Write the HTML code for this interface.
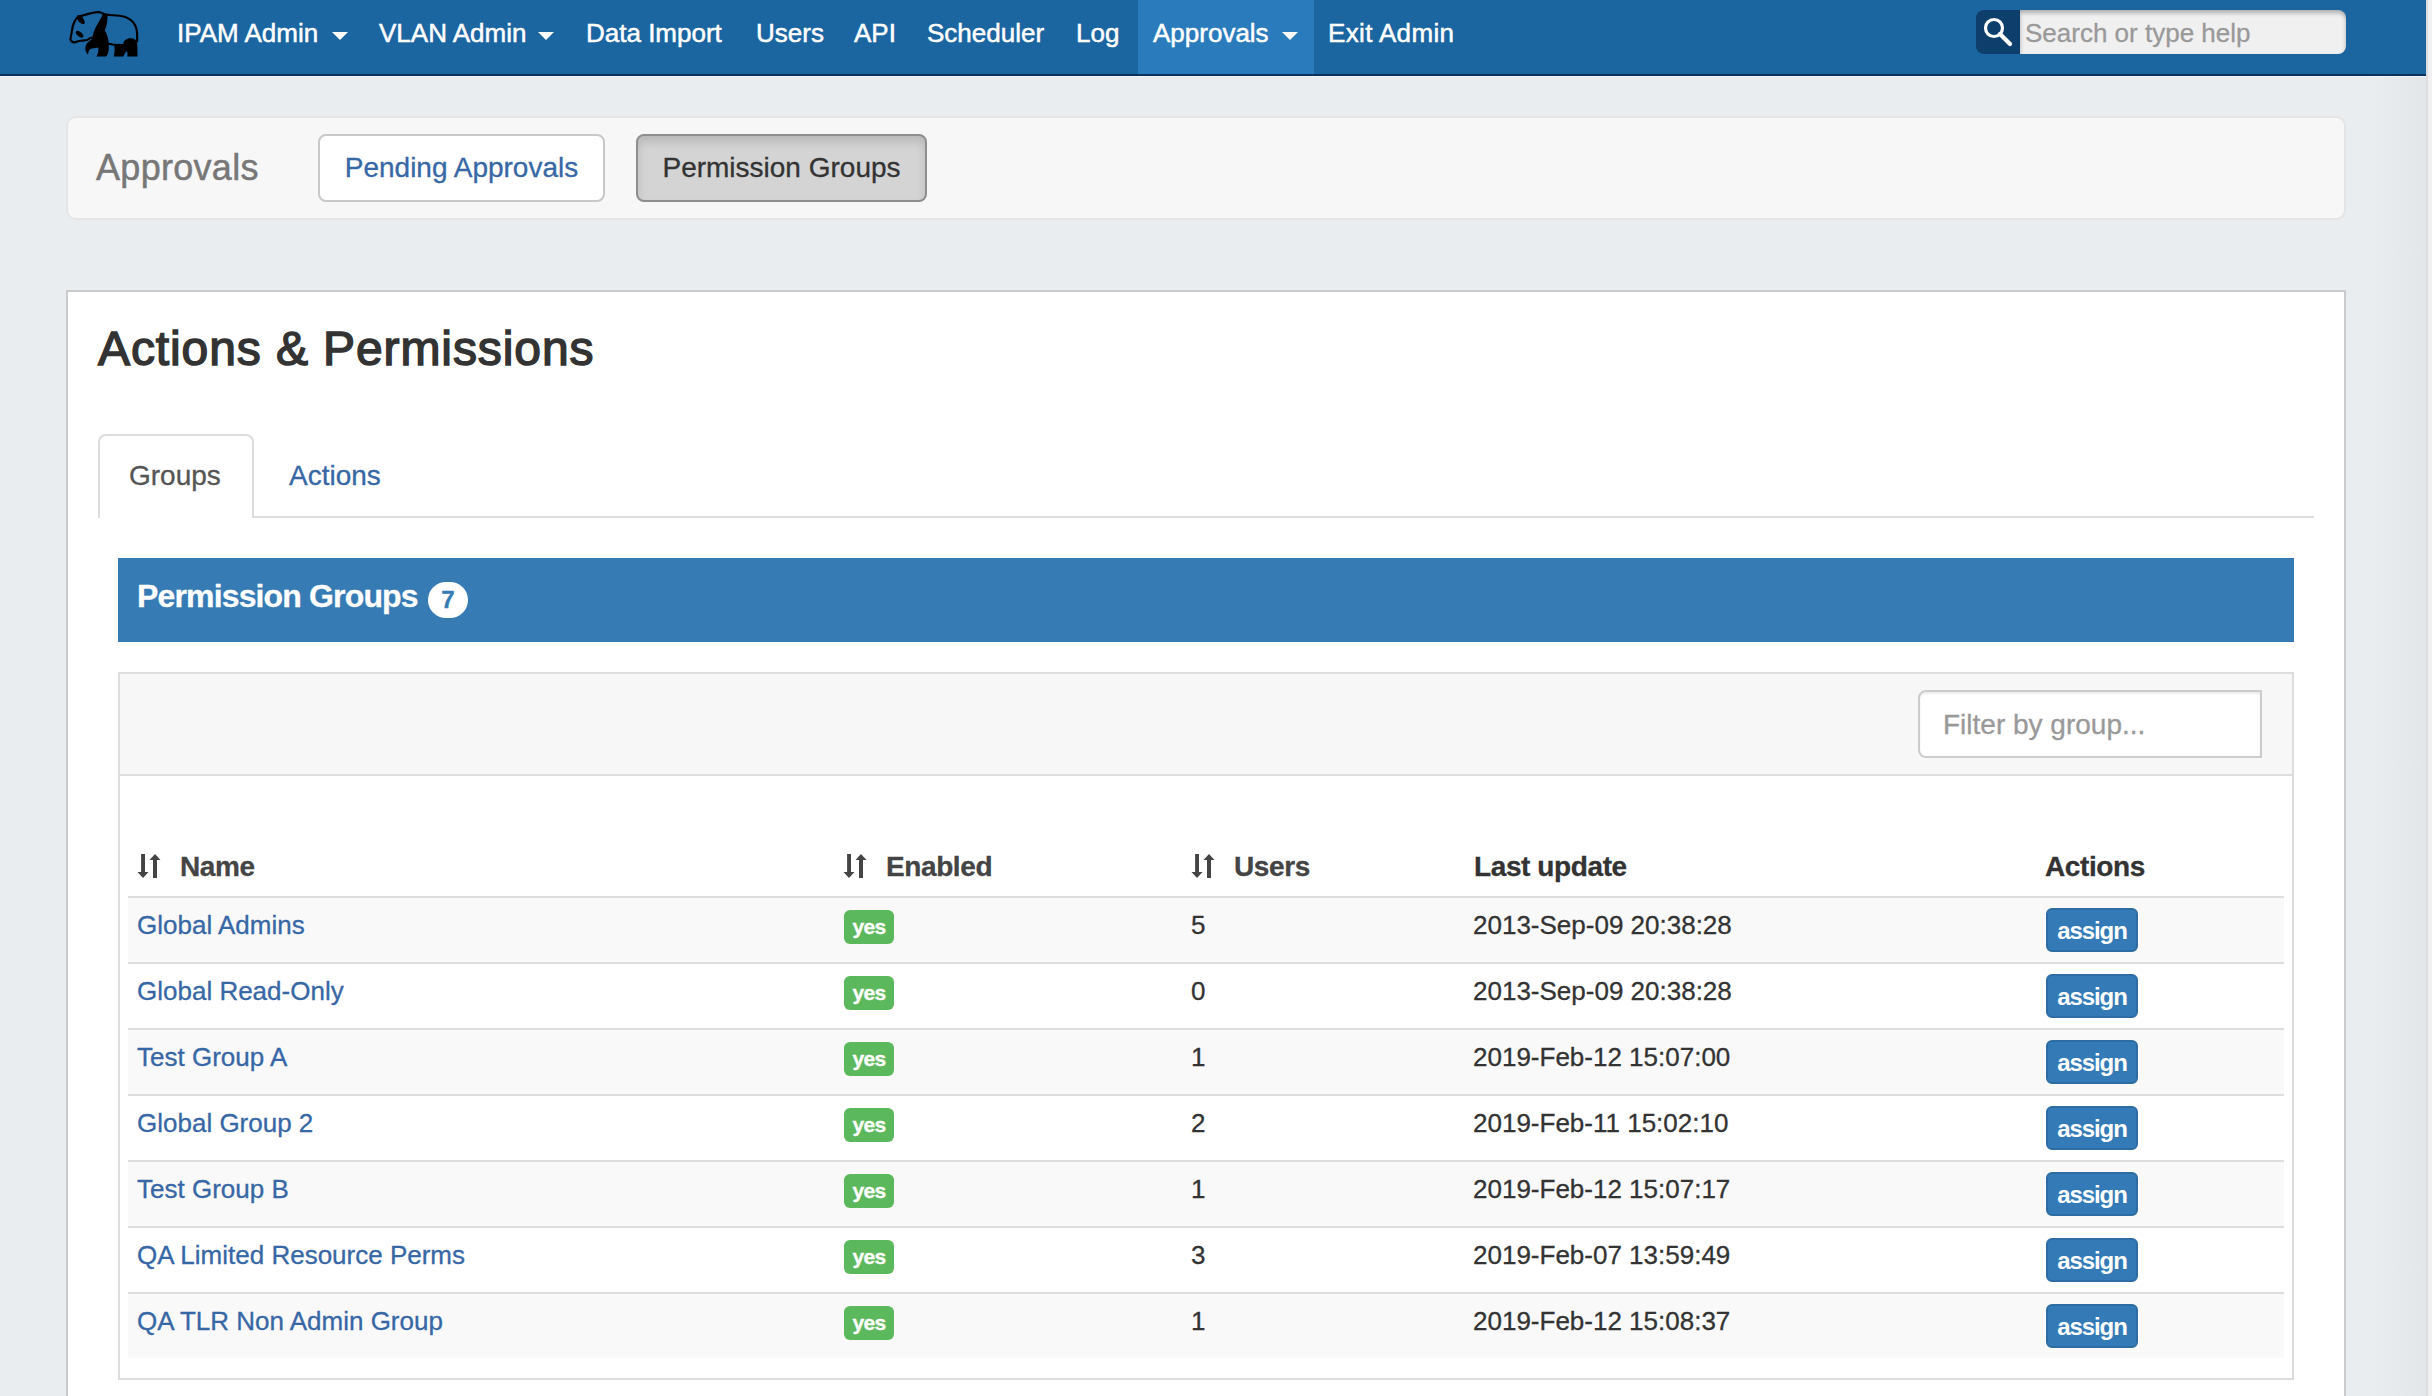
<!DOCTYPE html>
<html><head><meta charset="utf-8">
<style>
*{box-sizing:border-box;margin:0;padding:0}
html,body{width:2432px;height:1396px;overflow:hidden}
body{background:#e9edf0;font-family:"Liberation Sans",sans-serif;position:relative;color:#333}
.a{position:absolute;white-space:nowrap;-webkit-text-stroke:0.3px currentColor}
#strip{left:2426px;top:0;width:6px;height:1396px;background:linear-gradient(to right,#dedede 0,#dedede 2px,#f1f1f1 2px)}
#rgrad{left:2346px;top:76px;width:80px;height:1320px;background:linear-gradient(to right,rgba(0,0,0,0) 0,rgba(0,0,0,0) 30%,rgba(40,50,60,.035) 100%)}
#navhl{left:0;top:76px;width:2426px;height:1px;background:#f1f3f5}
#nav{left:0;top:0;width:2426px;height:76px;background:#1b65a1;border-bottom:2px solid #0b325c}
#navact{left:1138px;top:0;width:176px;height:74px;background:#2a7bbb}
.ni{color:#fff;font-size:26px;top:18px;line-height:30px;-webkit-text-stroke:0.5px #fff}
.caret{width:0;height:0;border-left:8px solid transparent;border-right:8px solid transparent;border-top:8px solid #fff;top:32px}
#sadd{left:1976px;top:10px;width:44px;height:44px;background:#0e3f6c;border-radius:8px 0 0 8px}
#sinp{left:2020px;top:10px;width:326px;height:44px;background:#f0f0f0;border-radius:0 8px 8px 0;box-shadow:inset 0 3px 4px rgba(0,0,0,.28)}
#sph{left:2025px;top:18px;font-size:26px;color:#999;line-height:30px}

#bc{left:66px;top:116px;width:2280px;height:104px;background:#f7f7f7;border:2px solid #e5e5e5;border-radius:10px}
#bct{left:96px;top:147px;font-size:36px;color:#777;line-height:42px;letter-spacing:0.3px;-webkit-text-stroke:0.5px #777}
.btn{border-radius:8px;font-size:28px;line-height:32px;text-align:center}
#b1{left:318px;top:134px;width:287px;height:68px;background:#fff;border:2px solid #c8c8c8;color:#3767a5;padding-top:16px}
#b2{left:636px;top:134px;width:291px;height:68px;background:#d4d4d4;border:2px solid #8e8e8e;color:#333;padding-top:16px;box-shadow:inset 0 6px 10px rgba(0,0,0,.13)}

#main{left:66px;top:290px;width:2280px;height:1200px;background:#fff;border:2px solid #cbcbcb}
#h3{left:98px;top:321px;font-size:48px;font-weight:normal;color:#333;line-height:56px;letter-spacing:0.9px;-webkit-text-stroke:1.5px #333}
#tabline{left:98px;top:516px;width:2216px;height:2px;background:#ddd}
#tab1{left:98px;top:434px;width:156px;height:84px;background:#fff;border:2px solid #ddd;border-bottom:none;border-radius:8px 8px 0 0}
#t1{left:129px;top:460px;font-size:28px;color:#555;line-height:32px}
#t2{left:289px;top:460px;font-size:28px;color:#3767a5;line-height:32px}

#ph{left:118px;top:558px;width:2176px;height:84px;background:#377bb5}
#pht{left:137px;top:578px;font-size:32px;font-weight:bold;color:#fff;line-height:36px;letter-spacing:-0.85px}
#badge{left:428px;top:582px;width:40px;height:36px;border-radius:18px;background:#fff;color:#377bb5;font-size:24px;font-weight:bold;text-align:center;line-height:36px}

#tc{left:118px;top:672px;width:2176px;height:708px;border:2px solid #ddd;background:#fff}
#fbar{left:120px;top:674px;width:2172px;height:102px;background:#f7f7f7;border-bottom:2px solid #ddd}
#finp{left:1918px;top:690px;width:344px;height:68px;background:#fff;border:2px solid #ccc;border-radius:8px 0 0 8px;box-shadow:inset 0 2px 2px rgba(0,0,0,.075)}
#fph{left:1943px;top:709px;font-size:28px;color:#999;line-height:32px}

.th{font-size:28px;font-weight:bold;color:#444;top:851px;line-height:32px;letter-spacing:-0.4px}
.sort{top:854px;width:24px;height:25px}
.row{left:128px;width:2156px;height:66px;border-top:2px solid #ddd}
.odd{background:#f9f9f9}
.td{font-size:26px;color:#333;line-height:30px}
.lnk{color:#3767a5}
.yes{width:50px;height:34px;background:#5cb85c;border-radius:6px;color:#fff;font-size:21px;font-weight:bold;text-align:center;line-height:34px;letter-spacing:-0.7px}
.asg{width:92px;height:44px;background:#337ab7;border:2px solid #2e6da4;border-radius:6px;color:#fff;font-size:24px;font-weight:bold;text-align:center;line-height:41px;letter-spacing:-1.1px;-webkit-text-stroke:0}
</style></head><body>
<div class="a" id="rgrad"></div>
<div class="a" id="navhl"></div>
<div class="a" id="strip"></div>
<div class="a" id="nav"></div>
<div class="a" id="navact"></div>
<svg class="a" style="left:66px;top:8px" width="76" height="52" viewBox="0 0 2040 1396">
 <g fill="none" stroke="#000" stroke-width="58" stroke-linecap="round">
  <path d="M330 230 C500 200 700 100 880 110 C950 115 990 150 1050 170 C1200 200 1400 190 1550 230 C1750 290 1900 450 1910 700 L1910 900"/>
  <path d="M330 230 C250 300 180 450 160 600 C150 700 120 780 120 850 C140 920 220 940 300 900 C380 870 460 880 560 860 C620 840 640 790 700 800"/>
  <path d="M1150 960 C1250 990 1400 1000 1560 990"/>
 </g>
 <g fill="#000">
  <path d="M300 215 C320 185 390 190 425 225 C465 270 505 340 505 395 C505 430 460 435 425 422 C375 402 325 352 302 300 C290 268 288 235 300 215 Z"/>
  <ellipse cx="365" cy="705" rx="120" ry="62" transform="rotate(38 365 705)"/>
  <path d="M990 150 L1110 180 C1120 300 1110 450 1040 600 C1100 700 1150 850 1150 1000 C1150 1150 1140 1250 1070 1300 L820 1300 C850 1230 880 1150 870 1060 C780 1080 680 1080 630 1120 C600 1160 600 1220 590 1250 C540 1220 510 1130 520 1040 C530 960 600 900 700 830 C720 700 760 560 850 420 C910 320 960 240 990 150 Z"/>
  <path d="M1540 950 C1550 840 1700 800 1800 820 C1870 840 1910 900 1915 1000 L1920 1300 L1640 1300 C1650 1250 1670 1200 1620 1160 C1580 1200 1570 1250 1540 1300 L1280 1300 C1300 1250 1310 1150 1300 1000 L1540 1000 Z"/>
 </g>
</svg>
<div class="a ni" style="left:177px">IPAM Admin</div>
<div class="a caret" style="left:332px"></div>
<div class="a ni" style="left:379px">VLAN Admin</div>
<div class="a caret" style="left:538px"></div>
<div class="a ni" style="left:586px">Data Import</div>
<div class="a ni" style="left:756px">Users</div>
<div class="a ni" style="left:854px">API</div>
<div class="a ni" style="left:927px">Scheduler</div>
<div class="a ni" style="left:1076px">Log</div>
<div class="a ni" style="left:1153px">Approvals</div>
<div class="a caret" style="left:1282px"></div>
<div class="a ni" style="left:1328px;letter-spacing:0.35px">Exit Admin</div>
<div class="a" id="sadd"></div>
<svg class="a" style="left:1976px;top:10px" width="44" height="44" viewBox="0 0 44 44">
 <circle cx="18" cy="18" r="8.5" fill="none" stroke="#fff" stroke-width="3.2"/>
 <line x1="24" y1="24" x2="34" y2="34" stroke="#fff" stroke-width="4.2" stroke-linecap="round"/>
</svg>
<div class="a" id="sinp"></div>
<div class="a" id="sph">Search or type help</div>

<div class="a" id="bc"></div>
<div class="a" id="bct">Approvals</div>
<div class="a btn" id="b1">Pending Approvals</div>
<div class="a btn" id="b2">Permission Groups</div>

<div class="a" id="main"></div>
<div class="a" id="h3">Actions &amp; Permissions</div>
<div class="a" id="tabline"></div>
<div class="a" id="tab1"></div>
<div class="a" id="t1">Groups</div>
<div class="a" id="t2">Actions</div>

<div class="a" id="ph"></div>
<div class="a" id="pht">Permission Groups</div>
<div class="a" id="badge">7</div>

<div class="a" id="tc"></div>
<div class="a" id="fbar"></div>
<div class="a" id="finp"></div>
<div class="a" id="fph">Filter by group...</div>

<!-- table header -->
<svg class="a sort" style="left:137px" viewBox="0 0 24 25"><path d="M4.1 0h3.9v18h3.5l-5.5 6-5.5-6h3.6z M18 0l5.5 6h-3.5v18h-4v-18h-3.5z" fill="#444"/></svg>
<div class="a th" style="left:180px">Name</div>
<svg class="a sort" style="left:843px" viewBox="0 0 24 25"><path d="M4.1 0h3.9v18h3.5l-5.5 6-5.5-6h3.6z M18 0l5.5 6h-3.5v18h-4v-18h-3.5z" fill="#444"/></svg>
<div class="a th" style="left:886px">Enabled</div>
<svg class="a sort" style="left:1191px" viewBox="0 0 24 25"><path d="M4.1 0h3.9v18h3.5l-5.5 6-5.5-6h3.6z M18 0l5.5 6h-3.5v18h-4v-18h-3.5z" fill="#444"/></svg>
<div class="a th" style="left:1234px">Users</div>
<div class="a th" style="left:1474px;color:#333">Last update</div>
<div class="a th" style="left:2045px;color:#333">Actions</div>

<!--ROWS-->
<div class="a row odd" style="top:896px;height:66px"></div>
<div class="a td lnk" style="left:137px;top:910px">Global Admins</div>
<div class="a yes" style="left:844px;top:910px">yes</div>
<div class="a td" style="left:1191px;top:910px">5</div>
<div class="a td" style="left:1473px;top:910px">2013-Sep-09 20:38:28</div>
<div class="a asg" style="left:2046px;top:908px">assign</div>
<div class="a row" style="top:962px;height:66px"></div>
<div class="a td lnk" style="left:137px;top:976px">Global Read-Only</div>
<div class="a yes" style="left:844px;top:976px">yes</div>
<div class="a td" style="left:1191px;top:976px">0</div>
<div class="a td" style="left:1473px;top:976px">2013-Sep-09 20:38:28</div>
<div class="a asg" style="left:2046px;top:974px">assign</div>
<div class="a row odd" style="top:1028px;height:66px"></div>
<div class="a td lnk" style="left:137px;top:1042px">Test Group A</div>
<div class="a yes" style="left:844px;top:1042px">yes</div>
<div class="a td" style="left:1191px;top:1042px">1</div>
<div class="a td" style="left:1473px;top:1042px">2019-Feb-12 15:07:00</div>
<div class="a asg" style="left:2046px;top:1040px">assign</div>
<div class="a row" style="top:1094px;height:66px"></div>
<div class="a td lnk" style="left:137px;top:1108px">Global Group 2</div>
<div class="a yes" style="left:844px;top:1108px">yes</div>
<div class="a td" style="left:1191px;top:1108px">2</div>
<div class="a td" style="left:1473px;top:1108px">2019-Feb-11 15:02:10</div>
<div class="a asg" style="left:2046px;top:1106px">assign</div>
<div class="a row odd" style="top:1160px;height:66px"></div>
<div class="a td lnk" style="left:137px;top:1174px">Test Group B</div>
<div class="a yes" style="left:844px;top:1174px">yes</div>
<div class="a td" style="left:1191px;top:1174px">1</div>
<div class="a td" style="left:1473px;top:1174px">2019-Feb-12 15:07:17</div>
<div class="a asg" style="left:2046px;top:1172px">assign</div>
<div class="a row" style="top:1226px;height:66px"></div>
<div class="a td lnk" style="left:137px;top:1240px">QA Limited Resource Perms</div>
<div class="a yes" style="left:844px;top:1240px">yes</div>
<div class="a td" style="left:1191px;top:1240px">3</div>
<div class="a td" style="left:1473px;top:1240px">2019-Feb-07 13:59:49</div>
<div class="a asg" style="left:2046px;top:1238px">assign</div>
<div class="a row odd" style="top:1292px;height:66px"></div>
<div class="a td lnk" style="left:137px;top:1306px">QA TLR Non Admin Group</div>
<div class="a yes" style="left:844px;top:1306px">yes</div>
<div class="a td" style="left:1191px;top:1306px">1</div>
<div class="a td" style="left:1473px;top:1306px">2019-Feb-12 15:08:37</div>
<div class="a asg" style="left:2046px;top:1304px">assign</div>
<!--/ROWS-->
</body></html>
